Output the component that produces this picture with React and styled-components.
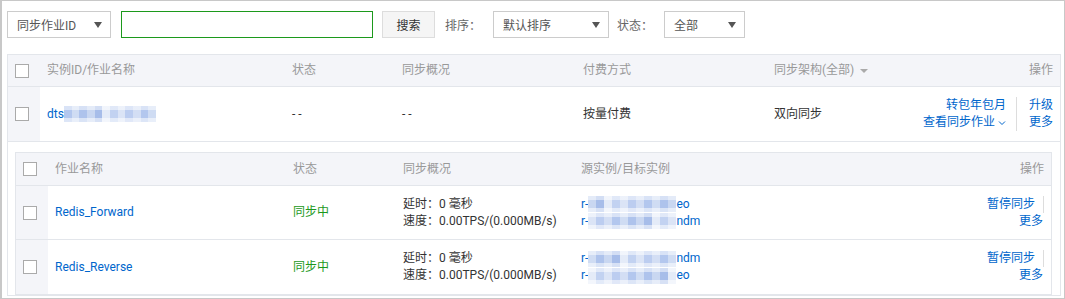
import React from 'react';
import styled, { createGlobalStyle } from 'styled-components';

const GlobalStyle = createGlobalStyle`
  body {
    margin: 0;
    font-family: Roboto, "Noto Sans CJK SC", "Microsoft YaHei", sans-serif;
    font-size: 12px;
    color: #333;
  }
`;

const Frame = styled.div`
  width: 1065px;
  height: 299px;
  box-sizing: border-box;
  border: 1px solid #c8c8c8;
  border-left-width: 2px;
  padding: 10px 1px 0 5px;
  overflow: hidden;
  background: #fff;
`;

const Toolbar = styled.div`
  display: flex;
  align-items: center;
  height: 27px;
`;

const Select = styled.div`
  width: ${p => p.w}px;
  height: 27px;
  box-sizing: border-box;
  border: 1px solid #ccc;
  display: flex;
  align-items: center;
  justify-content: space-between;
  padding: 0 8px 0 9px;
  color: #555;
  font-size: 12px;
`;

const Arrow = styled.span`
  width: 0;
  height: 0;
  border-left: 4px solid transparent;
  border-right: 4px solid transparent;
  border-top: 6px solid #555;
`;

const SearchInput = styled.input`
  width: 252px;
  height: 27px;
  box-sizing: border-box;
  border: 1px solid #1c991c;
  margin: 0 0 0 10px;
  padding: 0 8px;
  outline: none;
  font: inherit;
`;

const Button = styled.button`
  width: 53px;
  height: 27px;
  margin-left: 9px;
  border: 1px solid #ddd;
  background: #f5f5f5;
  color: #333;
  font: inherit;
  padding: 0;
`;

const Label = styled.span`
  color: #666;
  margin: 0 ${p => p.mr}px 0 ${p => p.ml}px;
`;

const Table = styled.div`
  margin-top: 16px;
  width: 1054px;
  box-sizing: border-box;
  border: 1px solid #e3e6eb;
`;

const Row = styled.div`
  display: grid;
  grid-template-columns: ${p => p.cols};
  height: ${p => p.h}px;
  box-sizing: border-box;
  align-items: stretch;
  background: ${p => (p.head ? '#f4f5f9' : '#fff')};
  border-bottom: 1px solid #e3e6eb;
  color: ${p => (p.head ? '#999' : '#333')};
  &:last-child {
    border-bottom: none;
  }
`;

const Cell = styled.div`
  display: flex;
  flex-direction: column;
  justify-content: center;
  align-items: ${p => (p.right ? 'flex-end' : 'flex-start')};
  padding: ${p => (p.right ? '0 7px 0 0' : '0 0 0 7px')};
  line-height: 17px;
  white-space: nowrap;
`;

const CheckCell = styled.div`
  display: flex;
  align-items: center;
  padding-left: 7px;
  background: #f4f5f9;
`;

const Box = styled.span`
  width: 14px;
  height: 14px;
  box-sizing: border-box;
  border: 1px solid #aaa;
  background: #fff;
`;

const Link = styled.a`
  color: #0066cc;
  text-decoration: none;
  cursor: pointer;
  display: inline-flex;
  align-items: center;
`;

const Status = styled.span`
  color: #1c991c;
`;

const Caret = styled.span`
  display: inline-block;
  margin-left: 6px;
  vertical-align: middle;
  width: 0;
  height: 0;
  border-left: 4px solid transparent;
  border-right: 4px solid transparent;
  border-top: 4px solid #aaa;
`;

const tones = ['#c9d7f1', '#b3c7ee', '#dbe4f6', '#a7bde9', '#cfdcf3', '#bccdf0', '#e4ebf8', '#aec3ec', '#d3def4', '#c2d2f1'];

const Blur = styled.span`
  display: inline-block;
  width: ${p => p.w}px;
  height: 16px;
  vertical-align: middle;
  background:
    linear-gradient(180deg, rgba(255,255,255,0.5) 0 25%, rgba(255,255,255,0) 25% 75%, rgba(255,255,255,0.55) 75% 100%),
    linear-gradient(90deg, ${p => {
      const n = Math.round(p.w / 8);
      return Array.from({ length: n }, (_, i) => {
        const c = tones[(i * 3 + p.seed) % tones.length];
        return `${c} ${(i / n) * 100}% ${((i + 1) / n) * 100}%`;
      }).join(', ');
    }});
`;

const OpsGrid = styled.div`
  display: grid;
  grid-template-columns: auto auto;
  justify-items: end;
`;

const OpLeft = styled.div`
  display: flex;
  align-items: center;
  height: 17px;
  padding-right: ${p => p.pr}px;
  margin-right: ${p => p.mr}px;
  border-right: ${p => (p.sep ? '1px solid #ddd' : 'none')};
  line-height: 13px;
`;

const Nest = styled.div`
  padding: 10px 8px 0 7px;
`;

const NestTable = styled.div`
  border: 1px solid #e3e6eb;
`;

const Chevron = () => (
  <svg width="8" height="6" viewBox="0 0 8 6" style={{ marginLeft: 3 }}>
    <path d="M1 1.5 L4 4.5 L7 1.5" fill="none" stroke="#0066cc" strokeWidth="1" />
  </svg>
);

const outerCols = '32px 245px 110px 181px 191px 1fr 160px';
const innerCols = '32px 238px 110px 178px 1fr 160px';

const jobs = [
  { name: 'Redis_Forward', src: ['eo', 'ndm'] },
  { name: 'Redis_Reverse', src: ['ndm', 'eo'] },
];

export default function App() {
  return (
    <>
      <GlobalStyle />
      <Frame>
        <Toolbar>
          <Select w={104}>同步作业ID<Arrow /></Select>
          <SearchInput />
          <Button>搜索</Button>
          <Label ml={10} mr={12}>排序：</Label>
          <Select w={116}>默认排序<Arrow /></Select>
          <Label ml={8} mr={11}>状态：</Label>
          <Select w={81}>全部<Arrow /></Select>
        </Toolbar>

        <Table>
          <Row head cols={outerCols} h={32}>
            <CheckCell><Box /></CheckCell>
            <Cell>实例ID/作业名称</Cell>
            <Cell>状态</Cell>
            <Cell>同步概况</Cell>
            <Cell>付费方式</Cell>
            <Cell><span>同步架构(全部)<Caret /></span></Cell>
            <Cell right>操作</Cell>
          </Row>
          <Row cols={outerCols} h={55}>
            <CheckCell><Box /></CheckCell>
            <Cell><span><Link>dts</Link><Blur w={92} seed={1} /></span></Cell>
            <Cell>- -</Cell>
            <Cell>- -</Cell>
            <Cell>按量付费</Cell>
            <Cell>双向同步</Cell>
            <Cell right>
              <OpsGrid>
                <OpLeft sep pr={10} mr={12}><Link>转包年包月</Link></OpLeft>
                <OpLeft pr={0} mr={0}><Link>升级</Link></OpLeft>
                <OpLeft sep pr={10} mr={12}><Link>查看同步作业<Chevron /></Link></OpLeft>
                <OpLeft pr={0} mr={0}><Link>更多</Link></OpLeft>
              </OpsGrid>
            </Cell>
          </Row>
          <Nest>
            <NestTable>
              <Row head cols={innerCols} h={33}>
                <CheckCell><Box /></CheckCell>
                <Cell>作业名称</Cell>
                <Cell>状态</Cell>
                <Cell>同步概况</Cell>
                <Cell>源实例/目标实例</Cell>
                <Cell right>操作</Cell>
              </Row>
              {jobs.map((job, i) => (
                <Row key={job.name} cols={innerCols} h={54}>
                  <CheckCell><Box /></CheckCell>
                  <Cell><Link>{job.name}</Link></Cell>
                  <Cell><Status>同步中</Status></Cell>
                  <Cell>
                    <span>延时：0 毫秒</span>
                    <span>速度：0.00TPS/(0.000MB/s)</span>
                  </Cell>
                  <Cell>
                    {job.src.map((tail, k) => (
                      <span key={k}>
                        <Link>r-</Link><Blur w={88} seed={i * 4 + k * 2} /><Link>{tail}</Link>
                      </span>
                    ))}
                  </Cell>
                  <Cell right>
                    <OpLeft sep pr={8} mr={0}><Link>暂停同步</Link></OpLeft>
                    <OpLeft pr={1} mr={0}><Link>更多</Link></OpLeft>
                  </Cell>
                </Row>
              ))}
            </NestTable>
          </Nest>
        </Table>
      </Frame>
    </>
  );
}
